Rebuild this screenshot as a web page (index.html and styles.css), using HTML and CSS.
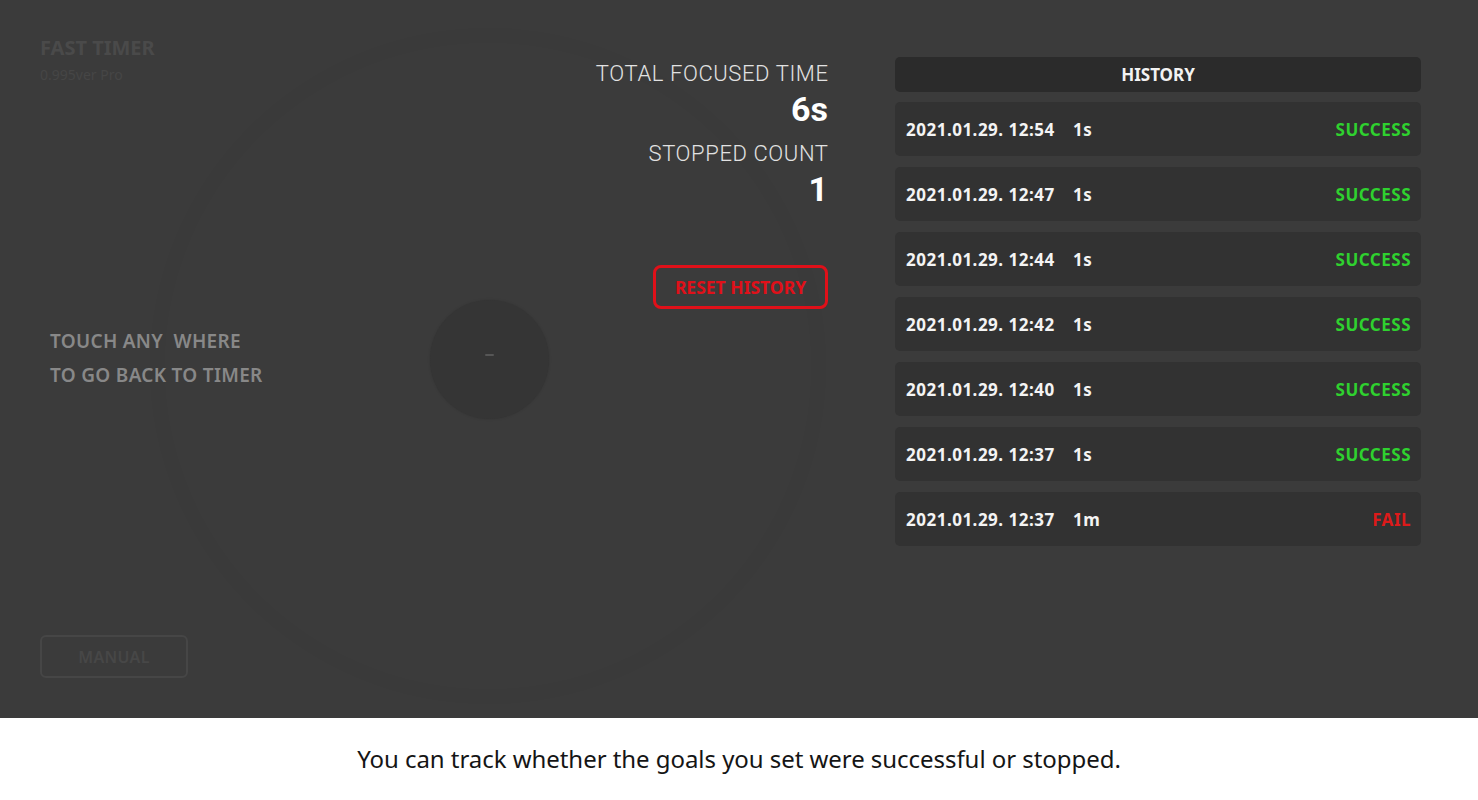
FILE: index.html
```html
<!DOCTYPE html>
<html lang="en">
<head>
<meta charset="utf-8">
<title>Fast Timer - History</title>
<link rel="stylesheet" href="styles.css">
</head>
<body>
<div class="app">
  <main class="screen">
    <div class="ring"></div>
    <div class="dial"><span class="dash"></span></div>
    <section class="left">
      <div class="brand">
        <div class="brand-title">FAST TIMER</div>
        <div class="brand-ver">0.995ver Pro</div>
      </div>
      <p class="hint">TOUCH ANY&nbsp; WHERE<br>TO GO BACK TO TIMER</p>
      <button class="manual">MANUAL</button>
    </section>
    <section class="stats">
      <div class="stat-label">TOTAL FOCUSED TIME</div>
      <div class="stat-value">6s</div>
      <div class="stat-label second">STOPPED COUNT</div>
      <div class="stat-value">1</div>
      <button class="reset">RESET HISTORY</button>
    </section>
    <section class="history">
      <div class="history-head">HISTORY</div>
      <ul class="history-list">
        <li class="row"><span class="date">2021.01.29. 12:54</span><span class="dur">1s</span><span class="status ok">SUCCESS</span></li>
        <li class="row"><span class="date">2021.01.29. 12:47</span><span class="dur">1s</span><span class="status ok">SUCCESS</span></li>
        <li class="row"><span class="date">2021.01.29. 12:44</span><span class="dur">1s</span><span class="status ok">SUCCESS</span></li>
        <li class="row"><span class="date">2021.01.29. 12:42</span><span class="dur">1s</span><span class="status ok">SUCCESS</span></li>
        <li class="row"><span class="date">2021.01.29. 12:40</span><span class="dur">1s</span><span class="status ok">SUCCESS</span></li>
        <li class="row"><span class="date">2021.01.29. 12:37</span><span class="dur">1s</span><span class="status ok">SUCCESS</span></li>
        <li class="row"><span class="date">2021.01.29. 12:37</span><span class="dur">1m</span><span class="status fail">FAIL</span></li>
      </ul>
    </section>
  </main>
  <footer class="caption">You can track whether the goals you set were successful or stopped.</footer>
</div>
</body>
</html>
```
FILE: styles.css
```css
* { box-sizing: border-box; }
html, body { margin: 0; padding: 0; }
body {
  font-family: "Noto Sans", "Open Sans", sans-serif;
  background: #ffffff;
}
.app { width: 1478px; height: 800px; display: flex; flex-direction: column; }

.screen {
  position: relative;
  height: 718px;
  background: #3b3b3b;
  display: flex;
  padding: 0 57px 0 40px;
  overflow: hidden;
}

/* decorative faint timer artwork behind content */
.ring {
  position: absolute;
  left: 150px;
  top: 28px;
  width: 676px;
  height: 676px;
  border-radius: 50%;
  box-shadow: inset 0 0 24px rgba(0,0,0,0.035);
}
.dial {
  position: absolute;
  left: 430px;
  top: 300px;
  width: 119px;
  height: 119px;
  border-radius: 50%;
  background: #353535;
  box-shadow: 0 0 3px rgba(0,0,0,0.12);
  display: flex;
  align-items: center;
  justify-content: center;
}
.dash {
  width: 9px;
  height: 2px;
  background: #565656;
  border-radius: 1px;
  margin-top: -9px;
}

.left {
  position: relative;
  flex: 1;
  display: flex;
  flex-direction: column;
  align-items: flex-start;
}
.brand { margin-top: 36px; }
.brand-title {
  font-size: 20px;
  line-height: 24px;
  font-weight: 700;
  color: #4a4a4a;
}
.brand-ver {
  margin-top: 6px;
  font-size: 14px;
  line-height: 18px;
  color: #464646;
}
.hint {
  margin: 240px 0 0 10px;
  font-size: 19px;
  line-height: 34px;
  font-weight: 600;
  color: #888888;
  letter-spacing: 0.3px;
}
.manual {
  margin-top: 243px;
  width: 148px;
  height: 43px;
  background: transparent;
  border: 2px solid #464646;
  border-radius: 6px;
  font-family: inherit;
  font-size: 16px;
  font-weight: 600;
  color: #474747;
  letter-spacing: 0.3px;
}

.stats {
  position: relative;
  display: flex;
  flex-direction: column;
  align-items: flex-end;
  padding-top: 61px;
  text-align: right;
  font-family: Roboto, "Noto Sans", sans-serif;
}
.stat-label {
  font-size: 22px;
  line-height: 26px;
  font-weight: 300;
  color: #e2e2e2;
  letter-spacing: 0.6px;
  margin-right: -0.6px;
}
.stat-label.second { margin-top: 13px; }
.stat-value {
  margin-top: 3px;
  font-size: 34px;
  line-height: 38px;
  font-weight: 700;
  color: #ffffff;
}
.reset {
  margin-top: 57px;
  width: 175px;
  height: 44px;
  background: transparent;
  border: 3px solid #e01019;
  border-radius: 8px;
  font-family: "Noto Sans", sans-serif;
  font-size: 17.5px;
  font-weight: 700;
  color: #e01019;
  padding: 0;
}

.history {
  position: relative;
  width: 526px;
  margin-left: 67px;
  padding-top: 57px;
}
.history-head {
  height: 35px;
  background: #2b2b2b;
  border-radius: 5px;
  display: flex;
  align-items: center;
  justify-content: center;
  font-size: 17px;
  font-weight: 700;
  color: #f2f2f2;
}
.history-list {
  list-style: none;
  margin: 10px 0 0;
  padding: 0;
  display: flex;
  flex-direction: column;
  gap: 11px;
}
.row {
  height: 54px;
  background: #323232;
  border-radius: 5px;
  display: flex;
  align-items: center;
  padding: 0 10px 0 11px;
  font-size: 17px;
  font-weight: 700;
  color: #f4f4f4;
  letter-spacing: 0.5px;
}
.date { width: 167px; }
.dur { flex: 1; }
.status.ok { color: #2fd12f; }
.status.fail { color: #dd1a1a; }

.caption {
  flex: 1;
  display: flex;
  align-items: center;
  justify-content: center;
  padding-bottom: 2px;
  font-size: 24px;
  color: #151515;
  letter-spacing: -0.05px;
}
```
